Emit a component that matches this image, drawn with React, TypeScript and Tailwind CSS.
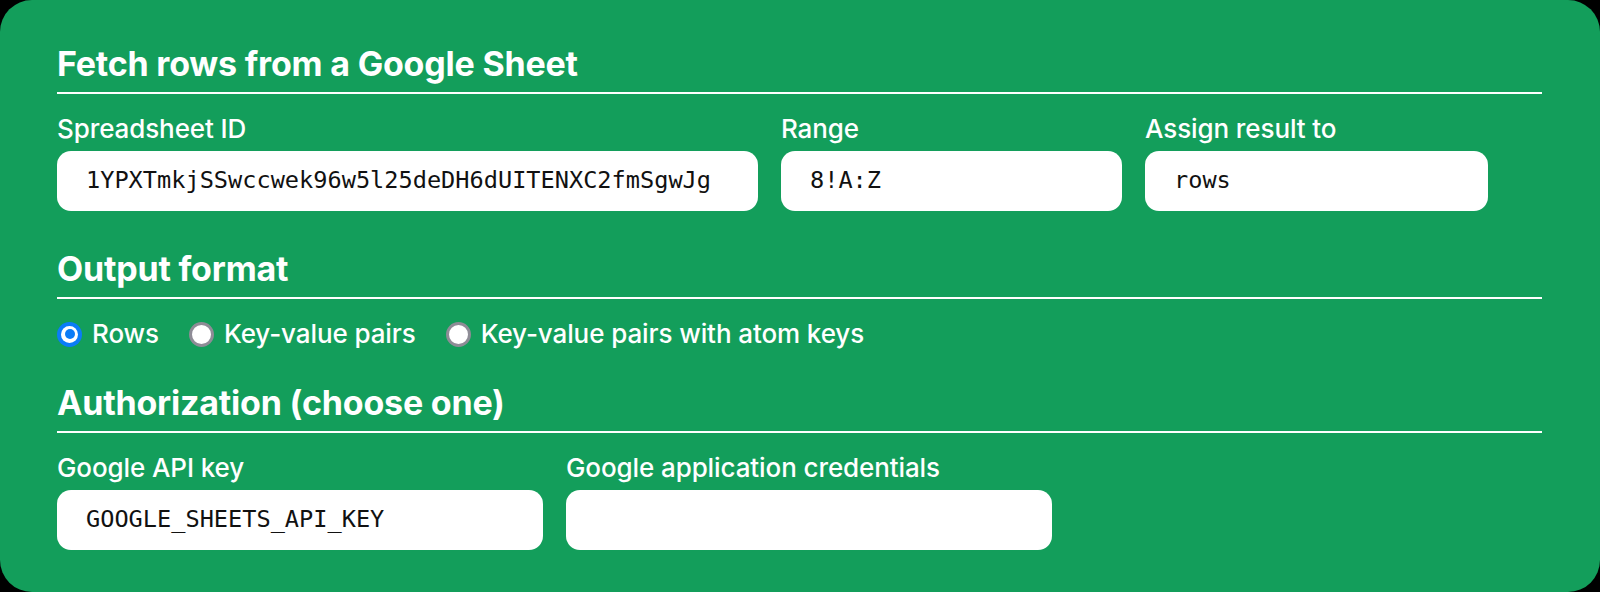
import type { ReactNode } from 'react'

const sans = { fontFamily: 'Inter, "Noto Sans", sans-serif' }

function Heading({ children, className = '' }: { children: ReactNode; className?: string }) {
  return (
    <div className={`border-b-2 border-white pb-[8px] ${className}`}>
      <h2 className="text-[34px] leading-[40px] font-bold text-white tracking-[-0.2px]">{children}</h2>
    </div>
  )
}

function Field({ label, value, width }: { label: string; value: string; width: string }) {
  return (
    <div className={`flex flex-col ${width}`}>
      <label className="text-[26px] leading-[30px] font-medium text-white tracking-[-0.1px]">{label}</label>
      <div className="mt-[7px] h-[60px] rounded-[14px] bg-white flex items-center pl-[29px]">
        <span className="font-['DejaVu_Sans_Mono',monospace] text-[23.6px] text-[#111]">{value}</span>
      </div>
    </div>
  )
}

function Radio({ label, checked = false }: { label: string; checked?: boolean }) {
  return (
    <div className="flex items-center gap-[10px]">
      {checked ? (
        <span className="w-[25px] h-[25px] rounded-full bg-[#0b7cf7] flex items-center justify-center">
          <span className="w-[17px] h-[17px] rounded-full bg-white flex items-center justify-center">
            <span className="w-[10px] h-[10px] rounded-full bg-[#0b7cf7]" />
          </span>
        </span>
      ) : (
        <span className="w-[25px] h-[25px] rounded-full bg-white border-[3px] border-[#8e8c96]" />
      )}
      <span className="text-[26px] leading-[30px] font-medium text-white tracking-[-0.1px]">{label}</span>
    </div>
  )
}

export default function App() {
  return (
    <div className="w-[1600px] h-[592px] bg-black" style={sans}>
      <div className="h-full rounded-[32px] bg-[#139e5b] pl-[57px] pr-[58px] pt-[44px]">
        <Heading>Fetch rows from a Google Sheet</Heading>
        <div className="mt-[20px] flex gap-[23px]">
          <Field label="Spreadsheet ID" value="1YPXTmkjSSwccwek96w5l25deDH6dUITENXC2fmSgwJg" width="w-[701px]" />
          <Field label="Range" value="8!A:Z" width="w-[341px]" />
          <Field label="Assign result to" value="rows" width="w-[343px]" />
        </div>

        <Heading className="mt-[38px]">Output format</Heading>
        <div className="mt-[20px] flex items-center gap-[30px]">
          <Radio label="Rows" checked />
          <Radio label="Key-value pairs" />
          <Radio label="Key-value pairs with atom keys" />
        </div>

        <Heading className="mt-[34px]">Authorization (choose one)</Heading>
        <div className="mt-[20px] flex gap-[23px]">
          <Field label="Google API key" value="GOOGLE_SHEETS_API_KEY" width="w-[486px]" />
          <Field label="Google application credentials" value="" width="w-[486px]" />
        </div>
      </div>
    </div>
  )
}
